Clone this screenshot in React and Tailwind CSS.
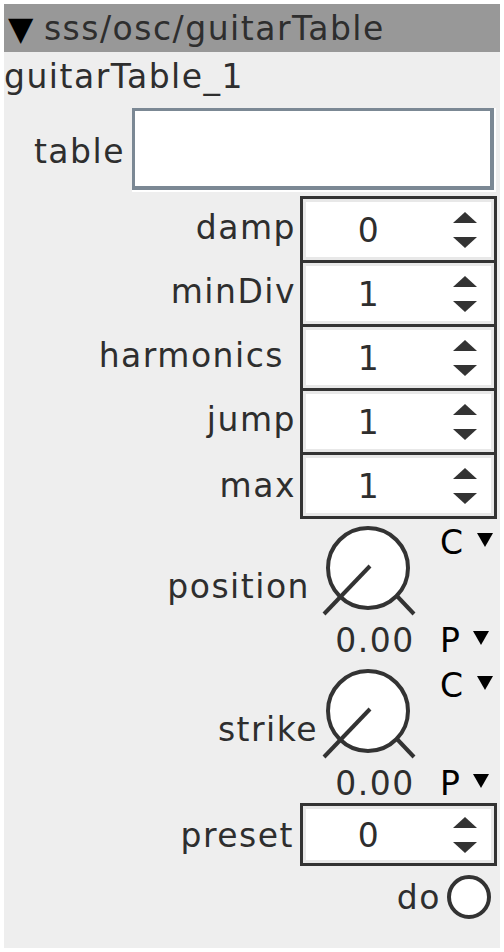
import React from 'react';

const font = { fontFamily: '"DejaVu Sans", sans-serif' };

function Tri({ className = '' }) {
  // small black down triangle used by the C / P menus
  return (
    <svg width="16" height="14" viewBox="0 0 16 14" className={className}>
      <polygon points="0,0 16,0 8,14" fill="#000" />
    </svg>
  );
}

function Arrows() {
  return (
    <div className="ml-auto mr-[14px] flex flex-col gap-[14px]">
      <svg width="24" height="11" viewBox="0 0 24 11">
        <polygon points="0,11 24,11 12,0" fill="#333" />
      </svg>
      <svg width="24" height="11" viewBox="0 0 24 11">
        <polygon points="0,0 24,0 12,11" fill="#333" />
      </svg>
    </div>
  );
}

function SpinCell({ value }) {
  return (
    <div className="flex h-full items-center border-[3px] border-[#e8e8e8] bg-white">
      <span className="w-[126px] pt-[3px] text-center">{value}</span>
      <Arrows />
    </div>
  );
}

function Knob() {
  return (
    <svg width="102" height="96" viewBox="0 0 102 96">
      <circle cx="50" cy="48" r="40" fill="#fff" stroke="#333" strokeWidth="4" />
      <line x1="52" y1="46" x2="6" y2="94" stroke="#333" strokeWidth="4" />
      <line x1="78" y1="75" x2="96" y2="94" stroke="#333" strokeWidth="4" />
    </svg>
  );
}

function KnobBlock({ label, top, width }) {
  return (
    <div className="flex items-start">
      <div className="text-right leading-[36px]" style={{ marginTop: top + 49, width }}>
        {label}
      </div>
      <div
        className="flex w-[102px] flex-col items-center"
        style={{ marginTop: top, marginLeft: 314 - width }}
      >
        <Knob />
        <span className="mt-[7px] ml-[12px] leading-[36px]">0.00</span>
      </div>
      <div className="ml-[20px] flex flex-col" style={{ marginTop: top + 5 }}>
        <div className="flex h-[36px] items-start leading-[36px] text-black">
          <span>C</span>
          <Tri className="ml-[12px] mt-[8px]" />
        </div>
        <div className="mt-[62px] flex h-[36px] items-start leading-[36px] text-black">
          <span>P</span>
          <Tri className="ml-[12px] mt-[8px]" />
        </div>
      </div>
    </div>
  );
}

const spinners = [
  ['damp', '0'],
  ['minDiv', '1'],
  ['harmonics ', '1'],
  ['jump', '1'],
  ['max', '1'],
];

export default function App() {
  return (
    <div className="min-h-screen bg-white p-1 text-[33px] tracking-[1.5px] text-[#2e2e2e]" style={font}>
      <div className="flex h-[944px] w-[496px] flex-col bg-[#eeeeee]">
        {/* title bar */}
        <div className="flex h-[48px] items-center bg-[#989898] pl-1 pt-[2px] leading-[36px]">
          <span className="text-black">▼</span>
          <span className="ml-[9px]">sss/osc/guitarTable</span>
        </div>

        <div className="mt-[7px] leading-[36px]">guitarTable_1</div>

        {/* table field */}
        <div className="mt-[13px] flex h-[84px] items-center">
          <span className="w-[121px] pt-[3px] text-right leading-[36px]">table</span>
          <div className="ml-[7px] h-[84px] w-[364px] border-r-2 border-b-2 border-white">
            <div className="h-full border-[3px] border-r-[4px] border-b-[4px] border-[#7b8894] bg-white" />
          </div>
        </div>

        {/* number boxes */}
        <div className="mt-[4px] flex flex-col">
          {spinners.map(([label, value], i) => (
            <div key={label} className="flex items-stretch">
              <span className="w-[292px] self-center text-right leading-[36px] whitespace-pre">{label}</span>
              <div
                className={
                  'ml-[4px] w-[197px] border-x-[3px] border-t-[3px] border-[#333] ' +
                  (i === spinners.length - 1 ? 'h-[67px] border-b-[3px]' : 'h-[64px]')
                }
              >
                <SpinCell value={value} />
              </div>
            </div>
          ))}
        </div>

        <KnobBlock label="position" top={1} width={306} />
        <KnobBlock label="strike" top={4} width={314} />

        {/* preset */}
        <div className="mt-[1px] flex items-center">
          <span className="w-[290px] pt-[2px] text-right leading-[36px]">preset</span>
          <div className="ml-[6px] h-[63px] w-[197px] border-[3px] border-[#333]">
            <SpinCell value="0" />
          </div>
        </div>

        <div className="mt-[9px] flex items-center justify-end pr-[9px]">
          <span className="pt-[2px] leading-[36px]">do</span>
          <svg width="44" height="44" viewBox="0 0 44 44" className="ml-[6px]">
            <circle cx="22" cy="22" r="20" fill="#fff" stroke="#333" strokeWidth="4" />
          </svg>
        </div>
      </div>
    </div>
  );
}
